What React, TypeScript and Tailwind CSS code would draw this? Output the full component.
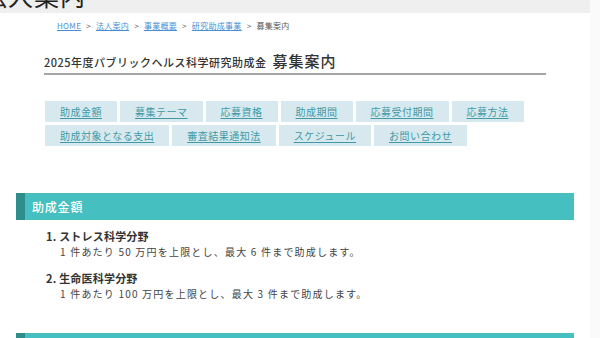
import React from "react";

const font = { fontFamily: '"Noto Sans CJK JP", "Noto Sans", sans-serif' };

const row1 = ["助成金額", "募集テーマ", "応募資格", "助成期間", "応募受付期間", "応募方法"];
const row2 = ["助成対象となる支出", "審査結果通知法", "スケジュール", "お問い合わせ"];

function Btn({ label }: { label: string }) {
  return (
    <a className="flex h-[21px] items-center bg-[#d7e9ee] px-[15px] text-[10px] tracking-[0.5px] text-[#3f9aa6] underline underline-offset-2">
      {label}
    </a>
  );
}

export default function App() {
  return (
    <div className="flex h-[338px] w-[600px] overflow-hidden bg-white" style={font}>
      <div className="w-[590px] shrink-0">
        <div className="h-[13px] overflow-hidden bg-[#efefef]">
          <div className="ml-[-18px] mt-[-17px] text-[25px] leading-[25px] tracking-[1px] text-[#222]">法人案内</div>
        </div>
        <div className="ml-[57px] mt-[7px] flex h-[12px] items-center gap-[5px] text-[8px] leading-[12px] tracking-[0.3px] text-[#555]">
          <a className="text-[#4a8fd6] underline">HOME</a>
          <span>&gt;</span>
          <a className="text-[#4a8fd6] underline">法人案内</a>
          <span>&gt;</span>
          <a className="text-[#4a8fd6] underline">事業概要</a>
          <span>&gt;</span>
          <a className="text-[#4a8fd6] underline">研究助成事業</a>
          <span>&gt;</span>
          <span>募集案内</span>
        </div>
        <div className="ml-[44px] mt-[18px] flex h-[25px] w-[502px] items-end border-b-2 border-[#a5a5a5] pb-[3px] text-[#333]">
          <span className="text-[11px] font-medium leading-[16px] tracking-[0.5px]">2025年度パブリックヘルス科学研究助成金</span>
          <span className="ml-[6px] text-[15px] font-medium leading-[18px] tracking-[1px]">募集案内</span>
        </div>
        <div className="ml-[45px] mt-[26px] flex w-[502px] flex-col gap-[3px]">
          <div className="flex gap-[3px]">
            {row1.map((l) => (
              <Btn key={l} label={l} />
            ))}
          </div>
          <div className="flex gap-[3px]">
            {row2.map((l) => (
              <Btn key={l} label={l} />
            ))}
          </div>
        </div>
        <div className="ml-[16px] mt-[47px] flex h-[27px] w-[558px] bg-[#45bfbf]">
          <div className="w-[9px] bg-[#2f8d8b]" />
          <div className="flex items-center pl-[7px] text-[12px] font-medium tracking-[0.8px] text-white">助成金額</div>
        </div>
        <div className="ml-[46px] mt-[9px] text-[11px] font-bold leading-[15px] tracking-[0.2px] text-[#333]">1. ストレス科学分野</div>
        <div className="ml-[60px] text-[10px] leading-[15px] tracking-[1.2px] text-[#444]">1 件あたり 50 万円を上限とし、最大 6 件まで助成します。</div>
        <div className="ml-[46px] mt-[12px] text-[11px] font-bold leading-[15px] tracking-[0.2px] text-[#333]">2. 生命医科学分野</div>
        <div className="ml-[60px] text-[10px] leading-[15px] tracking-[1.2px] text-[#444]">1 件あたり 100 万円を上限とし、最大 3 件まで助成します。</div>
        <div className="ml-[16px] mt-[32px] flex h-[27px] w-[558px] bg-[#45bfbf]">
          <div className="w-[9px] bg-[#2f8d8b]" />
        </div>
      </div>
      <div className="w-[10px] bg-[#fafafa]" />
    </div>
  );
}
